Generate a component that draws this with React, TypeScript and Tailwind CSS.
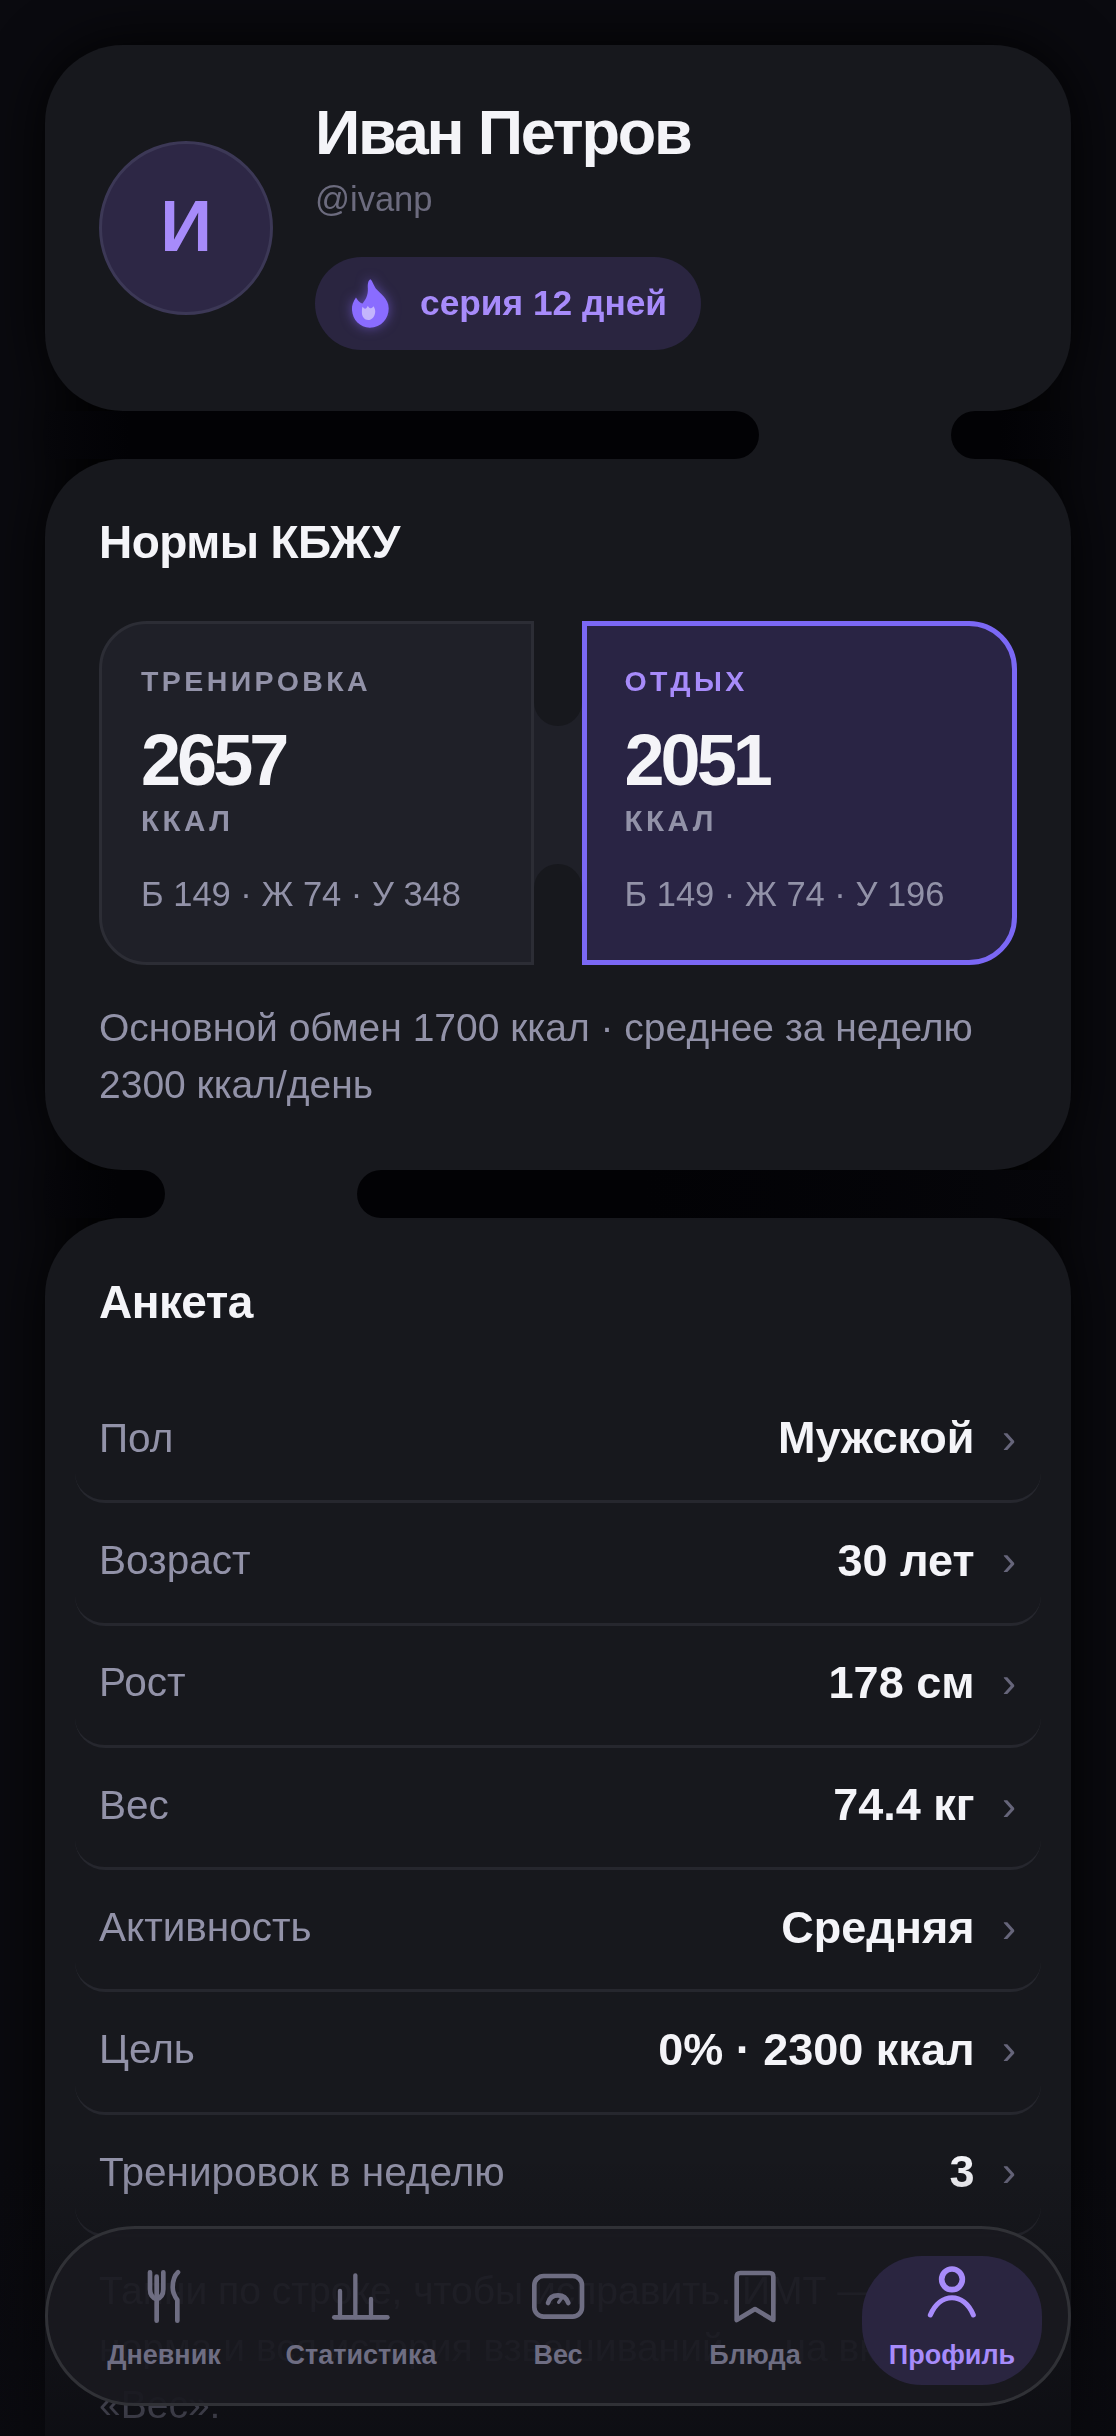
import React from "react";

const rows: [string, string][] = [
  ["Пол", "Мужской"],
  ["Возраст", "30 лет"],
  ["Рост", "178 см"],
  ["Вес", "74.4 кг"],
  ["Активность", "Средняя"],
  ["Цель", "0% · 2300 ккал"],
  ["Тренировок в неделю", "3"],
];

function Gap({ side }: { side: "a" | "b" }) {
  return (
    <div className="flex h-12 bg-[#17181d]">
      <div
        className={
          side === "a"
            ? "w-[714px] rounded-r-[24px] bg-gradient-to-r from-[#06060a] to-[#020205] to-[12%]"
            : "w-[120px] rounded-r-[24px] bg-gradient-to-r from-[#06060a] to-[#020205] to-[60%]"
        }
      />
      <div className="w-[192px]" />
      <div className="flex-1 rounded-l-[24px] bg-gradient-to-l from-[#06060a] to-[#020205] to-[60%]" />
    </div>
  );
}

function Macro({ active, title, kcal, macros }: { active?: boolean; title: string; kcal: string; macros: string }) {
  return (
    <div
      className={
        active
          ? "h-[344px] w-[435px] shrink-0 rounded-r-[48px] border-[5px] border-[#7b68f5] bg-[#292444] pl-[37.5px] pt-[36.5px]"
          : "h-[344px] w-[435px] shrink-0 rounded-l-[48px] border-[3px] border-[#2c2d35] bg-[#1f2028] pl-[39px] pt-[38.5px]"
      }
    >
      <div className={"text-[28.5px] leading-[36px] font-bold tracking-[0.12em] " + (active ? "text-[#a78bfa]" : "text-[#9292a8]")}>{title}</div>
      <div className="mt-[21px] text-[72px] leading-[80px] font-bold tracking-[-0.055em] text-[#f4f4f8]">{kcal}</div>
      <div className="mt-[3px] text-[29.5px] leading-[36px] font-bold tracking-[0.12em] text-[#9292a8]">ККАЛ</div>
      <div className="mt-[33px] text-[34.5px] leading-[44px] text-[#9292a8]">{macros}</div>
    </div>
  );
}

function NavItem({ label, active, children }: { label: string; active?: boolean; children: React.ReactNode }) {
  return (
    <div
      className={
        "flex h-[129px] w-[180px] flex-col items-center rounded-[60px] pt-[7px] " +
        (active ? "bg-[#2a2540] text-[#a78bfa]" : "text-[#6e6d82]")
      }
    >
      {children}
      <div className="mt-[9px] text-[27px] leading-[34px] font-bold whitespace-nowrap">{label}</div>
    </div>
  );
}

export default function App() {
  return (
    <div className="relative h-[2436px] w-[1116px] overflow-hidden bg-[#0a0a0f] font-['Liberation_Sans',sans-serif]">
      <div className="px-[45px] pt-[45px] drop-shadow-[0_0_30px_rgba(0,0,0,0.9)]">
        <section className="flex h-[366px] items-center gap-[42px] rounded-[78px] bg-[#17181d] px-[54px]">
          <div className="flex h-[174px] w-[174px] items-center justify-center rounded-full border-[3px] border-[#3c3856] bg-[#2d2745] pb-[4px] text-[72px] font-bold text-[#a78bfa]">
            И
          </div>
          <div className="flex flex-col items-start pb-[13px] pt-[3px]">
            <div className="text-[63px] leading-[72px] font-bold tracking-[-0.035em] text-[#f4f4f8]">Иван Петров</div>
            <div className="mt-[9px] text-[34.5px] leading-[44px] text-[#6c6b7e]">@ivanp</div>
            <div className="mt-[36px] flex h-[93px] items-center gap-[29px] rounded-full bg-[#2a2540] pl-[35px] pr-[34px] text-[35.3px] font-bold text-[#a78bfa]">
              <svg viewBox="150 110 124 160" className="h-[53px] w-[41px] drop-shadow-[0_0_6px_rgba(139,108,255,0.55)]">
                <path
                  d="M212 117C205 120 203 130 204 145C205 165 197 180 188 190C180 190 172 178 168 172C160 185 155 195 156 210C158 240 180 263 210 263C245 263 267 235 267 205C267 175 240 160 228 145C220 133 218 122 212 117Z"
                  fill="#8a6cff"
                />
                <path d="M188 200C194 208 199 208 204 197C208 207 215 206 221 198C226 205 227 212 226 218C224 231 216 240 205 240C194 240 186 230 186 218C186 210 186 205 188 200Z" fill="#c4b5fd" />
              </svg>
              серия 12 дней
            </div>
          </div>
        </section>

        <Gap side="a" />

        <section className="h-[711px] rounded-[78px] bg-[#17181d] px-[54px] pt-[52.5px]">
          <h2 className="text-[46px] leading-[60px] font-bold tracking-[-0.012em] text-[#f4f4f8]">Нормы КБЖУ</h2>
          <div className="mt-[49.5px] flex">
            <Macro title="ТРЕНИРОВКА" kcal="2657" macros="Б 149 · Ж 74 · У 348" />
            <div className="flex h-[344px] w-12 shrink-0 flex-col justify-between bg-[#1f2028]">
              <div className="h-[105px] rounded-b-[24px] bg-[#17181d]" />
              <div className="h-[101px] rounded-t-[24px] bg-[#17181d]" />
            </div>
            <Macro active title="ОТДЫХ" kcal="2051" macros="Б 149 · Ж 74 · У 196" />
          </div>
          <p className="mt-[34px] text-[39px] leading-[57px] text-[#9292a8]">
            Основной обмен 1700 ккал · среднее за неделю 2300 ккал/день
          </p>
        </section>

        <Gap side="b" />

        <section className="h-[1400px] rounded-[78px] bg-[#17181d] px-[54px] pt-[54px]">
          <h2 className="text-[46px] leading-[60px] font-bold tracking-[-0.012em] text-[#f4f4f8]">Анкета</h2>
          <div className="mx-[-24px] mt-[49px]">
            {rows.map(([label, value]) => (
              <div
                key={label}
                className="flex h-[122.3px] items-center justify-between rounded-b-[30px] border-b-[3px] border-[#26272e] pb-[5px] pl-[24px] pr-[25px]"
              >
                <span className="text-[40.5px] text-[#9292a8]">{label}</span>
                <span className="flex items-center gap-[27.5px]">
                  <span className="text-[45px] font-bold text-[#f4f4f8]">{value}</span>
                  <span className="text-[42px] text-[#66657a]">›</span>
                </span>
              </div>
            ))}
          </div>
          <p className="mt-[25px] text-[39px] leading-[57px] text-[#9292a8]">
            Тапни по строке, чтобы исправить. ИМТ — 23.5 — норма и вся история взвешиваний — на вкладке «Вес».
          </p>
        </section>
      </div>

      <div className="absolute inset-x-0 bottom-0 h-[280px] bg-gradient-to-b from-transparent to-[#0a0a0f]/70" />

      <nav className="absolute bottom-[30px] left-[45px] flex h-[180px] w-[1026px] items-center justify-between rounded-[90px] border-[3px] border-[#303136] bg-[#19191f]/[0.93] px-[26px] pt-[9px]">
        <NavItem label="Дневник">
          <svg viewBox="301 159 198 198" className="h-[66px] w-[66px]" fill="none" stroke="currentColor" strokeWidth="14" strokeLinecap="round" strokeLinejoin="round">
            <path d="M358 187V238C358 255 366 264 378 268C390 264 398 255 398 238V187" />
            <path d="M378 200V332" />
            <path d="M442 187C430 198 426 215 426 232C426 250 434 262 440 270V332" />
          </svg>
        </NavItem>
        <NavItem label="Статистика">
          <svg viewBox="896 159 198 198" className="h-[66px] w-[66px]" fill="none" stroke="currentColor" strokeWidth="13" strokeLinecap="round">
            <path d="M915 322H1074" strokeWidth="14" />
            <path d="M932 243V322M978 196V322M1025 267V322" />
          </svg>
        </NavItem>
        <NavItem label="Вес">
          <svg viewBox="370 159 198 198" className="h-[66px] w-[66px]" fill="none" stroke="currentColor" strokeWidth="14" strokeLinecap="round">
            <rect x="398" y="198" width="143" height="122" rx="28" />
            <path d="M439 279C443 263 455 256 469 256C483 256 495 264 500 279" strokeWidth="14" />
            <path d="M471 277L482 262" strokeWidth="10" />
          </svg>
        </NavItem>
        <NavItem label="Блюда">
          <svg viewBox="965 159 198 198" className="h-[66px] w-[66px]" fill="none" stroke="currentColor" strokeWidth="14" strokeLinecap="round" strokeLinejoin="round">
            <path d="M1009 330V200C1009 193 1013 189 1020 189H1108C1115 189 1119 193 1119 200V330L1064 297Z" />
          </svg>
        </NavItem>
        <NavItem label="Профиль" active>
          <svg viewBox="551 159 198 198" className="h-[66px] w-[66px]" fill="none" stroke="currentColor" strokeLinecap="round">
            <circle cx="650" cy="208" r="31" strokeWidth="17" />
            <path d="M585 315C600 280 625 263 650 263C675 263 700 280 714 315" strokeWidth="15" />
          </svg>
        </NavItem>
      </nav>
    </div>
  );
}
